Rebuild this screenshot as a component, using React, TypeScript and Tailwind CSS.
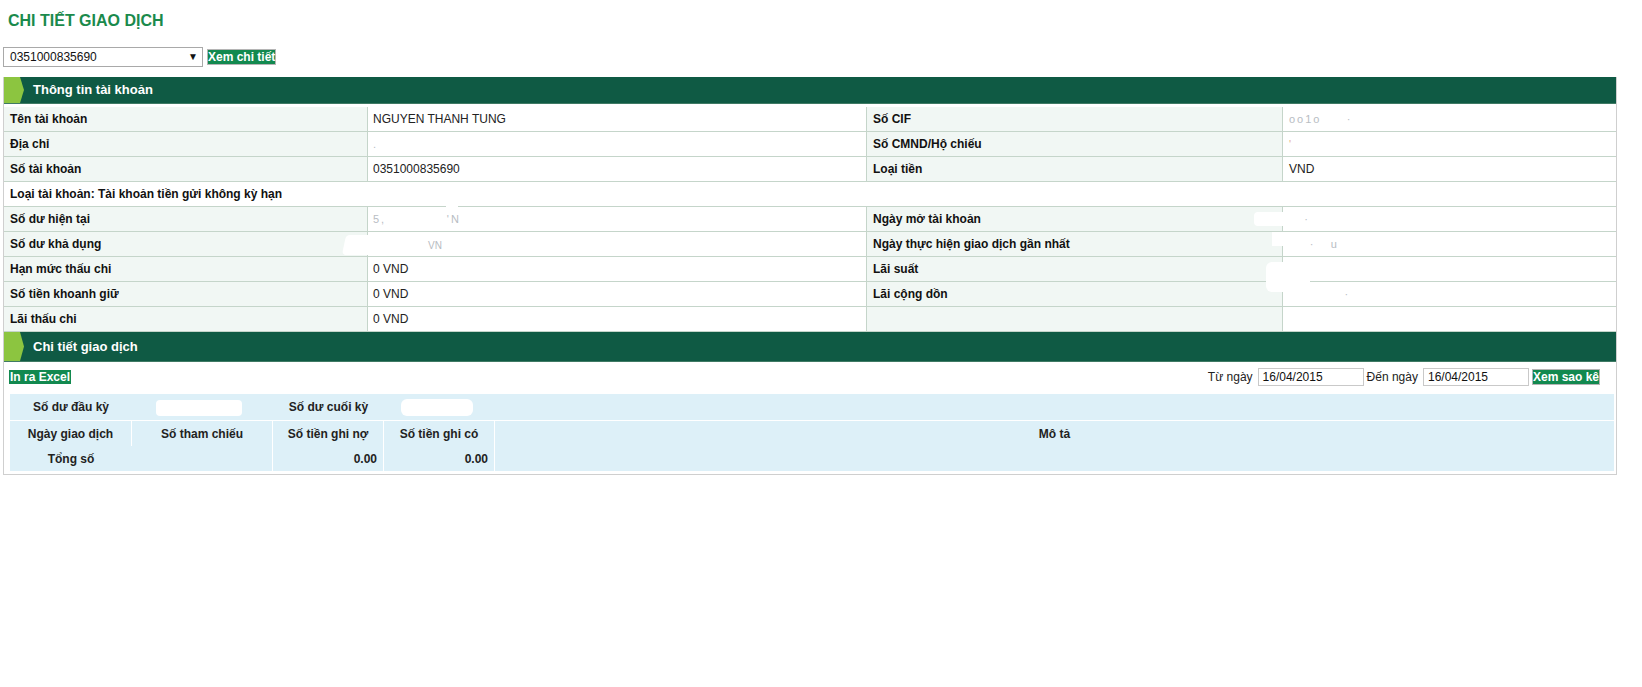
import React from "react";

type InfoRow = {
  l1: string;
  v1: React.ReactNode;
  l2: string;
  v2: React.ReactNode;
};

function Faint({ children }: { children: React.ReactNode }) {
  return <span className="text-[11px] tracking-[2px] text-[#b8bdc3]">{children}</span>;
}

const topRows: InfoRow[] = [
  { l1: "Tên tài khoản", v1: "NGUYEN THANH TUNG", l2: "Số CIF", v2: <Faint>oo1o&nbsp;&nbsp;&nbsp;&nbsp;&nbsp;·</Faint> },
  { l1: "Địa chỉ", v1: <Faint>.</Faint>, l2: "Số CMND/Hộ chiếu", v2: <span className="text-[11px] text-[#e7b48f]">'</span> },
  { l1: "Số tài khoản", v1: "0351000835690", l2: "Loại tiền", v2: "VND" },
];

const bottomRows: InfoRow[] = [
  { l1: "Số dư hiện tại", v1: <Faint>5,&nbsp;&nbsp;&nbsp;&nbsp;&nbsp;&nbsp;&nbsp;&nbsp;&nbsp;&nbsp;&nbsp;&nbsp;'N</Faint>, l2: "Ngày mở tài khoản", v2: <Faint>&nbsp;&nbsp;&nbsp;·</Faint> },
  { l1: "Số dư khả dụng", v1: "", l2: "Ngày thực hiện giao dịch gần nhất", v2: <Faint>·&nbsp;&nbsp;&nbsp;·&nbsp;&nbsp;&nbsp;u</Faint> },
  { l1: "Hạn mức thấu chi", v1: "0 VND", l2: "Lãi suất", v2: "" },
  { l1: "Số tiền khoanh giữ", v1: "0 VND", l2: "Lãi cộng dồn", v2: <Faint>&nbsp;&nbsp;&nbsp;&nbsp;&nbsp;&nbsp;&nbsp;&nbsp;&nbsp;&nbsp;&nbsp;·</Faint> },
  { l1: "Lãi thấu chi", v1: "0 VND", l2: "", v2: "" },
];

function SectionHeader({ title, tall }: { title: string; tall?: boolean }) {
  return (
    <div
      className={
        tall
          ? "flex h-[30px] items-stretch border-b border-[#3f7a64] bg-[#0f5a44]"
          : "flex h-[27px] items-stretch border-b border-[#3f7a64] bg-[#0f5a44]"
      }
    >
      <svg width="21" viewBox="0 0 21 26" preserveAspectRatio="none" className="shrink-0">
        <polygon points="0,0 16,0 20,13 16,26 0,26" fill="#8cc540" />
      </svg>
      <span className="ml-[8px] flex items-center text-[13px] font-bold text-white">{title}</span>
    </div>
  );
}

function Row({ row, first }: { row: InfoRow; first?: boolean }) {
  return (
    <div
      className={
        first
          ? "grid h-[28px] grid-cols-[364px_499px_416px_1fr] border-b border-[#c5d5ca] pt-[3px]"
          : "grid h-[25px] grid-cols-[364px_499px_416px_1fr] border-b border-[#c5d5ca]"
      }
    >
      <div className="flex items-center border-r border-[#c5d5ca] bg-[#f1f7f4] pl-[6px] font-bold text-[#111]">{row.l1}</div>
      <div className="flex items-center border-r border-[#c5d5ca] bg-white pl-[5px] text-[#222]">{row.v1}</div>
      <div className="flex items-center border-r border-[#c5d5ca] bg-[#f1f7f4] pl-[6px] font-bold text-[#111]">{row.l2}</div>
      <div className="flex items-center bg-white pl-[6px] text-[#222]">{row.v2}</div>
    </div>
  );
}

export default function App() {
  return (
    <div className="min-h-screen bg-white pl-[3px] font-['Liberation_Sans',Arial,sans-serif] text-[12px] text-[#222]">
      <div className="pl-[5px] pt-[12px] text-[16px] font-bold leading-[18px] text-[#1a8a4c]">CHI TIẾT GIAO DỊCH</div>

      <div className="mt-[17px] flex items-center">
        <div className="flex h-[20px] w-[200px] items-center justify-between border border-[#a9a9a9] bg-white pl-[6px] pr-[4px] text-[12px] text-[#111]">
          <span>0351000835690</span>
          <span className="text-[10px] leading-none text-[#111]">▼</span>
        </div>
        <span className="ml-[4px] flex h-[16px] items-center border border-[#b5b5b5] bg-[#12894f] font-bold leading-none text-white">
          Xem chi tiết
        </span>
      </div>

      <div className="mt-[10px] w-[1614px] border-x border-b border-[#cfcfcf] pb-[3px]">
        <SectionHeader title="Thông tin tài khoản" />

        <div className="relative">
          {topRows.map((r, i) => (
            <Row key={r.l1} row={r} first={i === 0} />
          ))}
          <div className="flex h-[25px] items-center border-b border-[#c5d5ca] bg-white pl-[6px] font-bold text-[#111]">
            Loại tài khoản: Tài khoản tiền gửi không kỳ hạn
          </div>
          {bottomRows.map((r) => (
            <Row key={r.l1} row={r} />
          ))}

          {/* redacted spots */}
          <div className="absolute left-[442px] top-[98px] h-[10px] w-[12px] rounded-sm bg-white" />
          <div className="absolute left-[340px] top-[131px] h-[20px] w-[96px] -skew-x-12 rounded-sm bg-white" />
          <span className="absolute left-[424px] top-[134px] text-[10px] text-[#b7bcc2]">VN</span>
          <div className="absolute left-[1250px] top-[108px] h-[14px] w-[40px] rounded-sm bg-white" />
          <div className="absolute left-[1262px] top-[158px] h-[30px] w-[44px] rounded-md bg-white" />
          <div className="absolute left-[1268px] top-[128px] h-[14px] w-[22px] bg-white" />
        </div>

        <SectionHeader title="Chi tiết giao dịch" tall />

        <div className="mt-[6px] flex h-[18px] items-center justify-between pl-[5px] pr-[16px]">
          <span className="flex h-[14px] items-center bg-[#12894f] px-[1px] font-bold leading-none text-white">In ra Excel</span>
          <div className="flex items-center">
            <span>Từ ngày</span>
            <div className="ml-[5px] flex h-[18px] w-[106px] items-center border border-[#c9c9c9] bg-white pl-[4px] text-[#111]">16/04/2015</div>
            <span className="ml-[3px]">Đến ngày</span>
            <div className="ml-[5px] flex h-[18px] w-[106px] items-center border border-[#c9c9c9] bg-white pl-[4px] text-[#111]">16/04/2015</div>
            <span className="ml-[3px] flex h-[16px] items-center border border-[#b5b5b5] bg-[#12894f] font-bold leading-none text-white">
              Xem sao kê
            </span>
          </div>
        </div>

        <div className="ml-[6px] mr-[2px] mt-[8px] bg-[#ddf0f8] font-bold text-[#222]">
          <div className="grid h-[27px] grid-cols-[122px_141px_111px_111px_1fr] items-center border-b border-white">
            <div className="text-center">Số dư đầu kỳ</div>
            <div className="relative h-full">
              <div className="absolute left-[24px] top-[6px] h-[16px] w-[86px] rounded-sm bg-white" />
            </div>
            <div className="text-center">Số dư cuối kỳ</div>
            <div className="relative h-full">
              <div className="absolute left-[17px] top-[5px] h-[17px] w-[72px] rounded-md bg-white" />
            </div>
            <div />
          </div>
          <div className="grid h-[25px] grid-cols-[122px_141px_111px_111px_1fr]">
            <div className="flex items-center justify-center border-r border-white">Ngày giao dịch</div>
            <div className="flex items-center justify-center border-r border-white">Số tham chiếu</div>
            <div className="flex items-center justify-center border-r border-white">Số tiền ghi nợ</div>
            <div className="flex items-center justify-center border-r border-white">Số tiền ghi có</div>
            <div className="flex items-center justify-center">Mô tả</div>
          </div>
          <div className="grid h-[25px] grid-cols-[122px_141px_111px_111px_1fr]">
            <div className="flex items-center justify-center">Tổng số</div>
            <div className="border-r border-white" />
            <div className="flex items-center justify-end border-r border-white pr-[6px]">0.00</div>
            <div className="flex items-center justify-end border-r border-white pr-[6px]">0.00</div>
            <div />
          </div>
        </div>
      </div>
    </div>
  );
}
